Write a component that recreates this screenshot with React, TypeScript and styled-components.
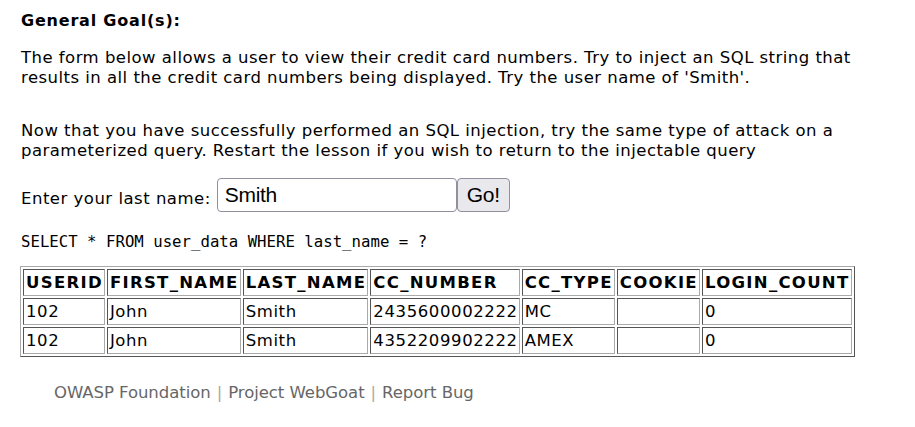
import React from "react";
import styled, { createGlobalStyle } from "styled-components";

const Global = createGlobalStyle`
  html, body { margin: 0; padding: 0; background: #fff; }
  body { font-family: "DejaVu Sans", Verdana, sans-serif; color: #000; }
`;

const Page = styled.div`
  padding: 11px 20px 0 21px;
  width: 874px;
`;

const Title = styled.div`
  font-weight: bold;
  font-size: 16px;
  letter-spacing: 0.8px;
  line-height: 20px;
  margin-bottom: 17px;
`;

const Para = styled.p<{ $gap?: number }>`
  margin: 0 0 ${(p) => p.$gap ?? 0}px 0;
  font-size: 16.5px;
  letter-spacing: 0.47px;
  line-height: 20px;
`;

const FormRow = styled.form`
  display: flex;
  align-items: center;
  margin-top: 17px;
  font-size: 16.5px;
  letter-spacing: 0.5px;
`;

const Label = styled.span`
  margin-right: 6px;
  padding-top: 7px;
`;

const NameInput = styled.input`
  box-sizing: border-box;
  width: 240px;
  height: 34px;
  border: 1px solid #8f8f9d;
  border-radius: 4px;
  padding: 0 7px;
  font-family: "Liberation Sans", Arial, sans-serif;
  font-size: 21px;
  letter-spacing: -0.3px;
  color: #000;
  outline: none;
`;

const GoButton = styled.button`
  box-sizing: border-box;
  height: 34px;
  width: 53px;
  border: 1px solid #8f8f9d;
  border-radius: 4px;
  background: #e9e9ed;
  font-family: "Liberation Sans", Arial, sans-serif;
  font-size: 21px;
  letter-spacing: -0.3px;
  color: #000;
  padding: 0;
`;

const Query = styled.div`
  font-family: "DejaVu Sans Mono", monospace;
  font-size: 15.7px;
  margin-top: 20px;
  line-height: 20px;
`;

const Table = styled.table`
  margin: 14px 0 0 -1px;
  border: 1px solid;
  border-color: #aaa #555 #555 #aaa;
  border-spacing: 2px;
  font-size: 16.5px;
`;

const Cell = styled.td<{ $head?: boolean }>`
  border: 1px solid;
  border-color: #555 #aaa #aaa #555;
  padding: 1px 1px 2px 2px;
  text-align: left;
  font-weight: ${(p) => (p.$head ? "bold" : "normal")};
  letter-spacing: ${(p) => (p.$head ? "1.3px" : "0.6px")};
  white-space: nowrap;
  height: 22px;
`;

const Footer = styled.div`
  margin-top: 26px;
  padding-left: 33px;
  color: #666;
  font-size: 16.5px;
  letter-spacing: -0.05px;
`;

const Sep = styled.span`
  color: #b0a89c;
  margin: 0 6px;
`;

const cols = ["USERID", "FIRST_NAME", "LAST_NAME", "CC_NUMBER", "CC_TYPE", "COOKIE", "LOGIN_COUNT"];
const rows = [
  ["102", "John", "Smith", "2435600002222", "MC", "", "0"],
  ["102", "John", "Smith", "4352209902222", "AMEX", "", "0"],
];

export default function App() {
  return (
    <>
      <Global />
      <Page>
        <Title>General Goal(s):</Title>
        <Para $gap={33}>
          The form below allows a user to view their credit card numbers. Try to inject an SQL string that
          results in all the credit card numbers being displayed. Try the user name of 'Smith'.
        </Para>
        <Para>
          Now that you have successfully performed an SQL injection, try the same type of attack on a
          parameterized query. Restart the lesson if you wish to return to the injectable query
        </Para>
        <FormRow onSubmit={(e) => e.preventDefault()}>
          <Label>Enter your last name:</Label>
          <NameInput defaultValue="Smith" />
          <GoButton type="submit">Go!</GoButton>
        </FormRow>
        <Query>SELECT * FROM user_data WHERE last_name = ?</Query>
        <Table>
          <tbody>
            <tr>
              {cols.map((c) => (
                <Cell as="th" $head key={c}>{c}</Cell>
              ))}
            </tr>
            {rows.map((r, i) => (
              <tr key={i}>
                {r.map((v, j) => (
                  <Cell key={j}>{v}</Cell>
                ))}
              </tr>
            ))}
          </tbody>
        </Table>
        <Footer>
          OWASP Foundation<Sep>|</Sep>Project WebGoat<Sep>|</Sep>Report Bug
        </Footer>
      </Page>
    </>
  );
}
